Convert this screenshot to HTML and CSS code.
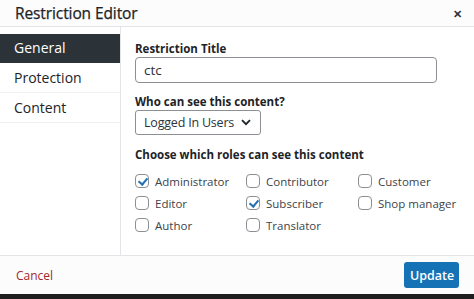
FILE: index.html
```html
<!DOCTYPE html>
<html lang="en">
<head>
  <meta charset="UTF-8">
  <title>Restriction Editor</title>
  <link rel="stylesheet" href="styles.css">
</head>
<body>
  <div class="modal">
    <div class="modal-header">
      <h1>Restriction Editor</h1>
      <span class="close">&#x2715;</span>
    </div>

    <div class="modal-body">
      <ul class="tabs">
        <li class="active">General</li>
        <li>Protection</li>
        <li>Content</li>
      </ul>

      <div class="panel">
        <label class="field-label">Restriction Title</label>
        <input type="text" class="text-input" value="ctc">

        <label class="field-label">Who can see this content?</label>
        <div class="select">
          <span>Logged In Users</span>
          <svg width="10" height="7" viewBox="0 0 10 7"><path d="M1 1.2l4 4 4-4" fill="none" stroke="#1d2327" stroke-width="1.8"/></svg>
        </div>

        <label class="field-label">Choose which roles can see this content</label>
        <div class="roles">
          <div class="role"><span class="box checked"></span>Administrator</div>
          <div class="role"><span class="box"></span>Contributor</div>
          <div class="role"><span class="box"></span>Customer</div>
          <div class="role"><span class="box"></span>Editor</div>
          <div class="role"><span class="box checked"></span>Subscriber</div>
          <div class="role"><span class="box"></span>Shop manager</div>
          <div class="role"><span class="box"></span>Author</div>
          <div class="role"><span class="box"></span>Translator</div>
        </div>
      </div>
    </div>

    <div class="modal-footer">
      <a class="cancel">Cancel</a>
      <button class="update">Update</button>
    </div>
    <div class="edge"></div>
  </div>
</body>
</html>
```

FILE: styles.css
```css
body {
  margin: 0;
  font-family: "Open Sans", "Noto Sans", sans-serif;
  color: #1d2327;
  background: #fff;
}
.modal {
  width: 474px;
  height: 299px;
  display: flex;
  flex-direction: column;
}
.modal-header {
  height: 26px;
  flex: none;
  display: flex;
  align-items: center;
  justify-content: space-between;
  padding: 0 12px 0 15px;
  background: #fcfcfc;
  border-bottom: 1px solid #e2e4e7;
}
.modal-header h1 {
  margin: 0;
  font-size: 15.5px;
  font-weight: 400;
  letter-spacing: -0.1px;
  -webkit-text-stroke: 0.25px #1d2327;
}
.close {
  font-size: 11px;
  font-weight: 700;
  color: #2c3338;
}
.modal-body {
  flex: 1;
  display: flex;
}
.tabs {
  flex: none;
  width: 120px;
  margin: 0;
  padding: 7px 0 0;
  list-style: none;
  border-right: 1px solid #e2e4e7;
}
.tabs li {
  height: 29px;
  line-height: 29px;
  padding-left: 14px;
  font-size: 14px;
  border-bottom: 1px solid #f0f0f1;
}
.tabs li.active {
  height: 28px;
  line-height: 28px;
  background: #2c3338;
  color: #fff;
  border-bottom: 1px solid #2c3338;
}
.panel {
  flex: 1;
  min-width: 0;
  padding: 15px 0 0 14px;
}
.field-label {
  display: block;
  font-size: 11.5px;
  font-weight: 700;
  line-height: 14px;
  margin-bottom: 1px;
}
.text-input {
  display: block;
  box-sizing: border-box;
  width: 302px;
  height: 26px;
  margin: 0 0 12px;
  padding: 0 8px;
  border: 1px solid #8c8f94;
  border-radius: 4px;
  font-family: inherit;
  font-size: 13.5px;
  color: #2c3338;
}
.select {
  box-sizing: border-box;
  width: 126px;
  height: 25px;
  margin-bottom: 13px;
  padding: 0 9px 0 8px;
  display: flex;
  align-items: center;
  justify-content: space-between;
  border: 1px solid #8c8f94;
  border-radius: 3px;
  font-size: 12.5px;
  letter-spacing: -0.2px;
  color: #2c3338;
}
.roles {
  display: grid;
  grid-template-columns: 111px 112px 111px;
  grid-auto-rows: 22px;
  margin-top: 8px;
}
.role {
  display: flex;
  align-items: center;
  font-size: 11.5px;
  color: #3c434a;
  white-space: nowrap;
}
.box {
  flex: none;
  box-sizing: border-box;
  width: 14px;
  height: 14px;
  margin-right: 6px;
  border: 1px solid #8c8f94;
  border-radius: 4px;
  position: relative;
}
.box.checked::after {
  content: "";
  position: absolute;
  left: 3.5px;
  top: 1px;
  width: 4px;
  height: 7px;
  border: solid #2271b1;
  border-width: 0 2px 2px 0;
  transform: rotate(40deg);
}
.modal-footer {
  height: 39px;
  flex: none;
  box-sizing: border-box;
  display: flex;
  align-items: center;
  justify-content: space-between;
  padding: 0 15px 0 16px;
  background: #fcfcfc;
  border-top: 1px solid #e2e4e7;
}
.cancel {
  font-size: 12px;
  color: #a3282e;
}
.update {
  width: 55px;
  height: 26px;
  border: none;
  border-radius: 3px;
  background: #1572b5;
  color: #fff;
  font-family: inherit;
  font-size: 12.5px;
  font-weight: 600;
}
.edge {
  height: 5px;
  flex: none;
  background: #1e1e1e;
}
```
